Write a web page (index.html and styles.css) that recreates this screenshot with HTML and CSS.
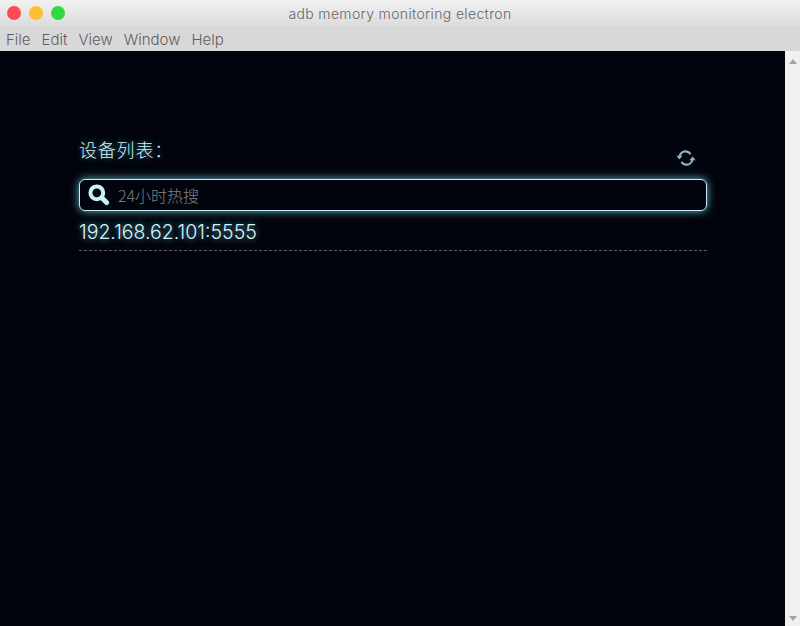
FILE: index.html
```html
<!DOCTYPE html>
<html lang="zh">
<head>
<meta charset="utf-8">
<title>adb memory monitoring electron</title>
<link rel="stylesheet" href="styles.css">
</head>
<body>
<div class="window">
  <header class="titlebar">
    <div class="lights">
      <span class="light red"></span>
      <span class="light yellow"></span>
      <span class="light green"></span>
    </div>
    <div class="title">adb memory monitoring electron</div>
  </header>
  <nav class="menubar">
    <span>File</span><span>Edit</span><span>View</span><span>Window</span><span>Help</span>
  </nav>
  <div class="body">
    <main class="content">
      <div class="head">
        <div class="label">设备列表：</div>
        <svg class="refresh" width="22" height="22" viewBox="0 0 22 22" fill="none">
          <path d="M4.6 9C5.6 5.6 8.8 3.8 12 4.6c1.4.4 2.6 1.2 3.6 2.6" stroke="#8fb4c4" stroke-width="2.2"/>
          <path d="M17.4 13c-1 3.4-4.2 5.2-7.4 4.4-1.4-.4-2.6-1.2-3.6-2.6" stroke="#8fb4c4" stroke-width="2.2"/>
          <path d="M1.4 8.8h6.2L4.4 12.6z" fill="#8fb4c4"/>
          <path d="M20.6 13.2h-6.2l3.2-3.8z" fill="#8fb4c4"/>
        </svg>
      </div>
      <div class="search">
        <svg class="search-icon" width="22" height="22" viewBox="0 0 22 22" fill="none">
          <circle cx="8.8" cy="8.8" r="6.4" stroke="#c5f2fb" stroke-width="4"/>
          <path d="M14 14l4.6 4.6" stroke="#c5f2fb" stroke-width="5" stroke-linecap="round"/>
        </svg>
        <span class="placeholder">24小时热搜</span>
      </div>
      <div class="device">192.168.62.101:5555</div>
    </main>
    <aside class="scrollbar">
      <span class="arrow up"></span>
      <span class="arrow down"></span>
    </aside>
  </div>
</div>
</body>
</html>
```
FILE: styles.css
```css
* { box-sizing: border-box; }
html, body { margin: 0; height: 100%; overflow: hidden; }
body { font-family: "Liberation Sans", "Noto Sans CJK SC", sans-serif; }
.window { width: 800px; height: 626px; display: flex; flex-direction: column; }
.titlebar {
  height: 26px; display: flex; align-items: center; position: relative;
  background: linear-gradient(#f1f1f1, #dcdcdc);
}
.lights { display: flex; gap: 8px; padding-left: 7px; }
.light { width: 14px; height: 14px; border-radius: 50%; }
.red { background: #fb4b55; }
.yellow { background: #fdc02f; }
.green { background: #30d944; }
.title {
  position: absolute; left: 0; right: 0; top: 5px; text-align: center;
  font-family: "Inter", "Liberation Sans", sans-serif;
  font-size: 14px; line-height: 17px; font-weight: 300; color: #666; letter-spacing: 0.35px;
}
.menubar {
  height: 25px; background: #d8d8d8; display: flex; gap: 11px; padding: 5px 0 0 6px;
  font-family: "Inter", "Liberation Sans", sans-serif;
  font-size: 15px; line-height: 18px; font-weight: 300; color: #5f5f5f;
}
.body { flex: 1; display: flex; min-height: 0; }
.content { flex: 1; background: #01040c; padding: 85px 78px 0 79px; }
.head { display: flex; justify-content: space-between; align-items: flex-start; height: 43px; }
.label {
  font-size: 18px; line-height: 27px; color: #c8f0f8; letter-spacing: 0.8px;
  font-family: "Noto Sans CJK SC", sans-serif; font-weight: 300;
  text-shadow: 0 0 6px rgba(120, 210, 235, .6);
}
.refresh { margin: 11px 10px 0 0; }
.search {
  height: 32px; border: 1px solid #c5eef7; border-radius: 6px; background: #01040c;
  box-shadow: 0 0 8px rgba(120, 215, 240, .85);
  display: flex; align-items: center; gap: 8px; padding: 0 0 0 8px;
}
.placeholder {
  font-size: 16px; line-height: 20px; color: #808286;
  font-family: "Noto Sans CJK SC", sans-serif; font-weight: 300;
}
.device {
  height: 40px; padding-top: 9px; border-bottom: 1px dashed #565a5e;
  font-family: "Inter", "Liberation Sans", sans-serif;
  font-size: 19.5px; line-height: 24px; font-weight: 300; color: #d2f4fa;
  text-shadow: 0 0 6px rgba(120, 215, 240, .8);
}
.scrollbar {
  width: 15px; background: #f1f1f1; display: flex; flex-direction: column;
  justify-content: space-between; align-items: center; padding: 8px 0 5px;
}
.arrow { width: 0; height: 0; border-left: 4px solid transparent; border-right: 4px solid transparent; }
.up { border-bottom: 5px solid #a3a3a3; }
.down { border-top: 5px solid #a3a3a3; }
```
